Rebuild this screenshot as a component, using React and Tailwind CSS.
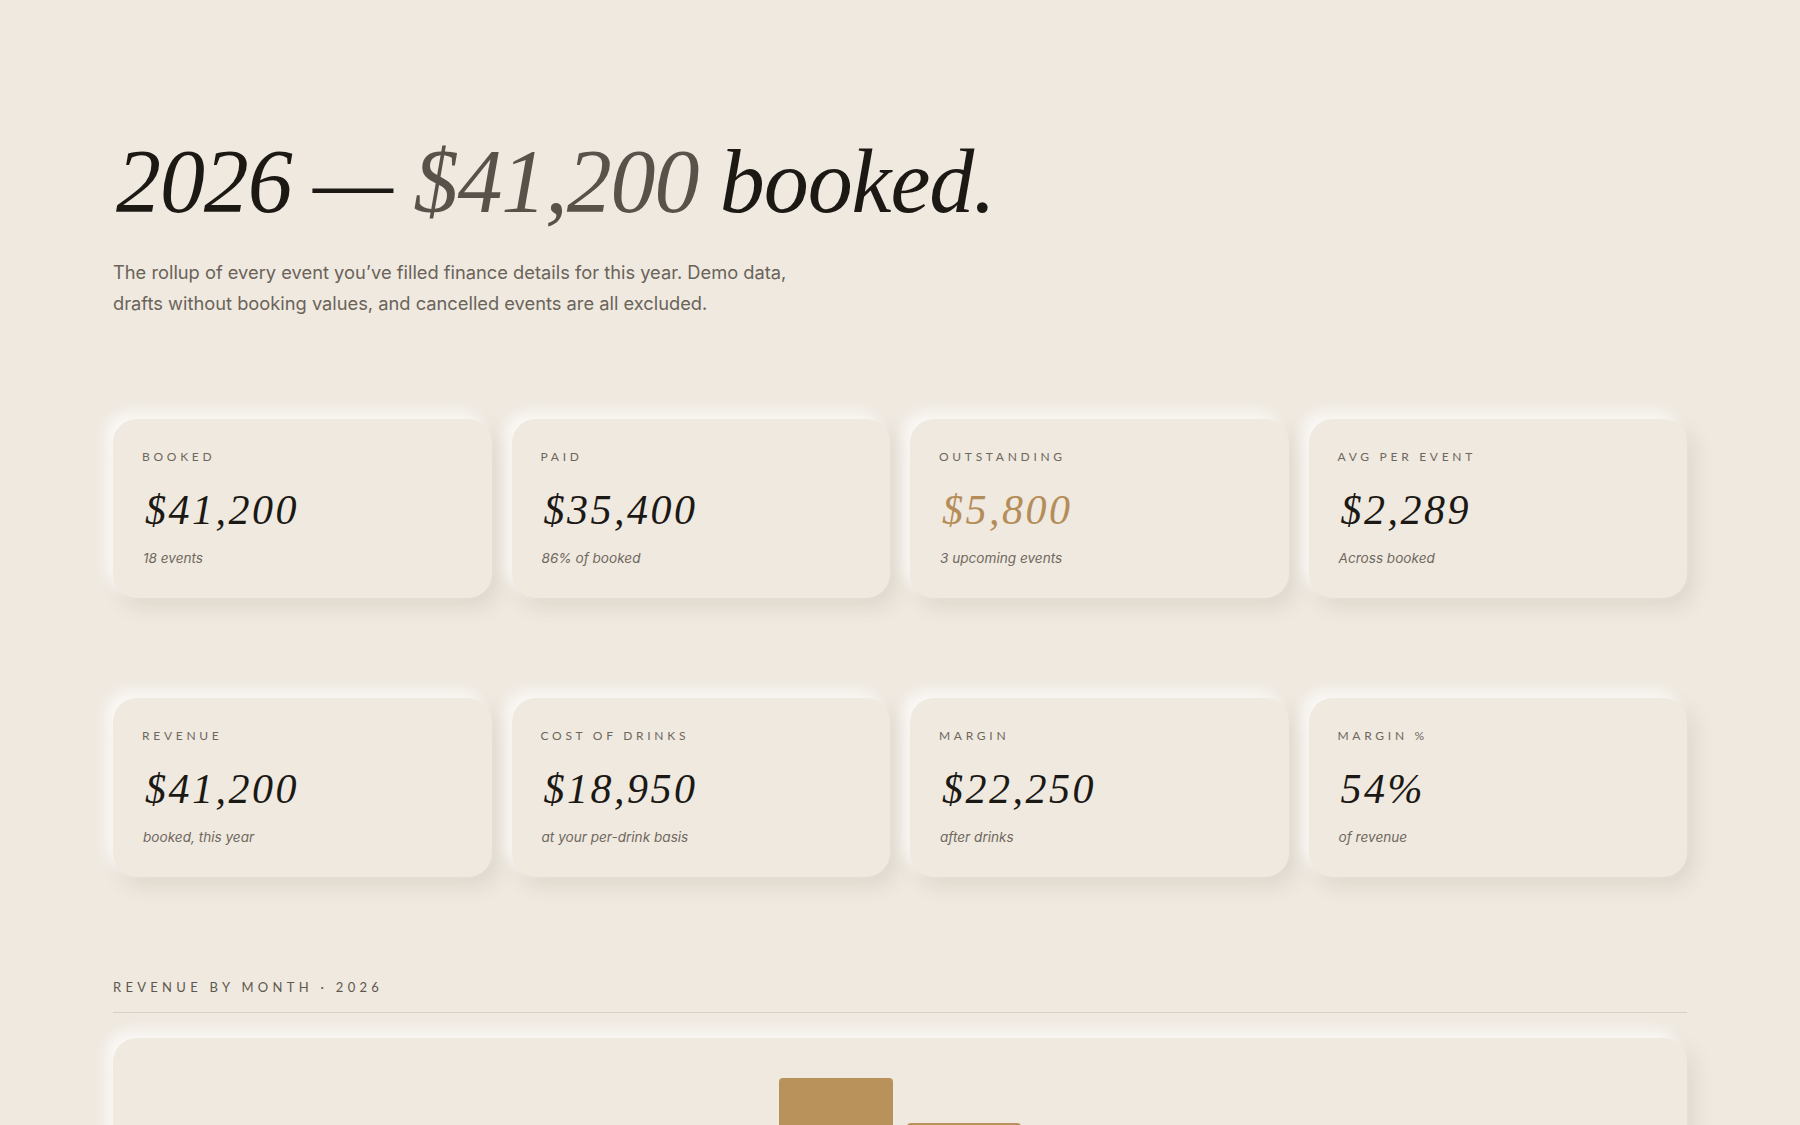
import React from "react";

const row1 = [
  { label: "BOOKED", value: "$41,200", sub: "18 events" },
  { label: "PAID", value: "$35,400", sub: "86% of booked" },
  { label: "OUTSTANDING", value: "$5,800", sub: "3 upcoming events", accent: true },
  { label: "AVG PER EVENT", value: "$2,289", sub: "Across booked" },
];
const row2 = [
  { label: "REVENUE", value: "$41,200", sub: "booked, this year" },
  { label: "COST OF DRINKS", value: "$18,950", sub: "at your per-drink basis" },
  { label: "MARGIN", value: "$22,250", sub: "after drinks" },
  { label: "MARGIN %", value: "54%", sub: "of revenue" },
];

const months = [
  { m: "Jan", h: 120 },
  { m: "Feb", h: 90 },
  { m: "Mar", h: 160 },
  { m: "Apr", h: 200 },
  { m: "May", h: 230 },
  { m: "Jun", h: 300 },
  { m: "Jul", h: 255 },
  { m: "Aug", h: 180 },
  { m: "Sep", h: 210 },
  { m: "Oct", h: 150 },
  { m: "Nov", h: 100 },
  { m: "Dec", h: 60 },
];

function Card({ label, value, sub, accent }) {
  return (
    <div className="rounded-[24px] bg-[#efe9e0] px-[29px] pt-[30px] pb-[30px] shadow-[-7px_-7px_14px_rgba(255,255,255,0.75),7px_9px_20px_rgba(110,90,60,0.13)]">
      <div className="font-['Lato',sans-serif] text-[12px] leading-[16px] tracking-[0.31em] text-[#6e675d]">
        {label}
      </div>
      <div
        className={
          "mt-[21px] pl-[3px] font-['Liberation_Serif',serif] italic text-[42px] leading-[48px] tracking-[0.06em] " +
          (accent ? "text-[#b48d58]" : "text-[#1c1915]")
        }
      >
        {value}
      </div>
      <div className="mt-[14px] pl-[1px] font-['Inter',sans-serif] italic text-[13.6px] leading-[20px] text-[#6f685e]">
        {sub}
      </div>
    </div>
  );
}

export default function App() {
  return (
    <div className="min-h-screen w-full bg-[#efe9e0] overflow-hidden">
      <div className="px-[113px] pt-[137px] pb-[80px]">
        <h1 className="pl-[3px] font-['Liberation_Serif',serif] italic text-[90px] leading-[90px] tracking-[-0.012em] text-[#1c1915]">
          2026 — <span className="text-[#58524a]">$41,200</span> booked.
        </h1>
        <p className="mt-[30px] max-w-[700px] font-['Inter',sans-serif] text-[18.3px] leading-[31px] text-[#6a6359]">
          The rollup of every event you’ve filled finance details for this year. Demo data, drafts without booking values, and cancelled events are all excluded.
        </p>

        <div className="mt-[100px] grid grid-cols-4 gap-[20px]">
          {row1.map((c) => (
            <Card key={c.label} {...c} />
          ))}
        </div>
        <div className="mt-[100px] grid grid-cols-4 gap-[20px]">
          {row2.map((c) => (
            <Card key={c.label} {...c} />
          ))}
        </div>

        <div className="mt-[101px] border-b border-[#d6d0c5] pb-[16px] font-['Lato',sans-serif] text-[13px] leading-[18px] tracking-[0.33em] text-[#5e584f]">
          REVENUE BY MONTH · 2026
        </div>

        <div className="mt-[25px] rounded-[24px] bg-[#efe9e0] px-[26px] pt-[40px] pb-[40px] shadow-[-7px_-7px_14px_rgba(255,255,255,0.75),7px_9px_20px_rgba(110,90,60,0.13)]">
          <div className="grid h-[300px] grid-cols-12 items-end gap-[14px]">
            {months.map((b) => (
              <div
                key={b.m}
                title={b.m}
                className="w-full rounded-t-[4px] bg-[#b8925a]"
                style={{ height: b.h + "px" }}
              />
            ))}
          </div>
        </div>
      </div>
    </div>
  );
}
